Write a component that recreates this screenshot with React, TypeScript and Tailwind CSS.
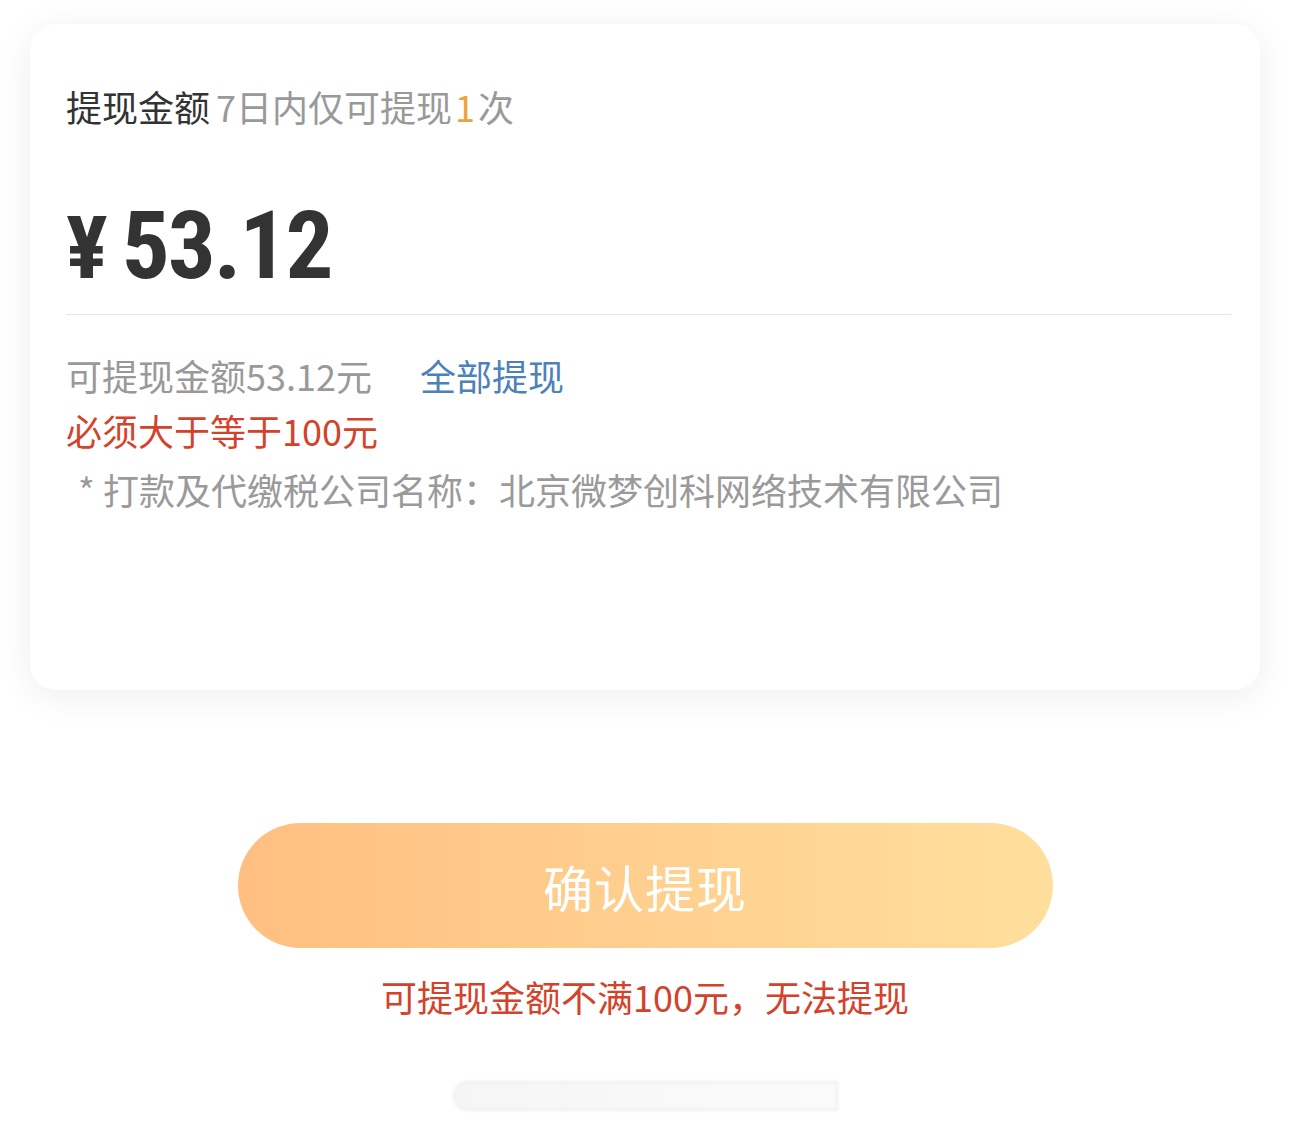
import React from "react";

const cjk = { fontFamily: '"Noto Sans CJK SC", "Noto Sans", sans-serif' };

export default function App() {
  return (
    <div className="w-[1290px] min-h-[1125px] bg-white flex flex-col items-center" style={cjk}>
      <div className="w-full px-[30px] pt-[24px]">
        <div className="bg-white rounded-[26px] shadow-[0_6px_36px_rgba(0,0,0,0.07)] pl-[36px] pr-[29px] pt-[62px] h-[666px]">
          <div className="text-[36px] leading-[40px] flex items-center">
            <span className="text-[#333333]">提现金额</span>
            <span className="text-[#999999] ml-[6px]">7日内仅可提现</span>
            <span className="text-[#f0a23a] mx-[3px]">1</span>
            <span className="text-[#999999]">次</span>
          </div>
          <div
            className="mt-[72px] h-[96px] leading-[96px] text-[95px] font-bold text-[#333333] flex items-baseline tracking-[-2px]"
            style={{ fontFamily: '"Liberation Sans Narrow", "Roboto Condensed", Roboto, sans-serif' }}
          >
            <span className="text-[88px] mr-[16px]">¥</span>
            <span>53.12</span>
          </div>
          <div className="mt-[20px] h-px bg-[#e6e6e6]" />
          <div className="mt-[33px] text-[36px] leading-[55px] flex">
            <span className="text-[#999999]">可提现金额53.12元</span>
            <span className="text-[#4d82b8] ml-[48px]">全部提现</span>
          </div>
          <div className="text-[36px] leading-[55px] text-[#d3432c]">必须大于等于100元</div>
          <div className="mt-[4px] text-[36px] leading-[55px] text-[#9a9a9a] pl-[12px]">
            * 打款及代缴税公司名称：北京微梦创科网络技术有限公司
          </div>
        </div>
      </div>
      <button className="mt-[133px] w-[815px] h-[125px] rounded-full bg-gradient-to-r from-[#ffbf80] to-[#ffdf9d] text-white text-[50px] leading-[122px] tracking-[1px]">
        确认提现
      </button>
      <div className="mt-[23px] text-[36px] leading-[50px] text-[#d3432c]">可提现金额不满100元，无法提现</div>
      <div className="mt-[60px] w-[385px] h-[30px] rounded-l-full border-2 border-[#e6e6e6] blur-[1.5px] opacity-70 bg-gradient-to-r from-[#f2f2f2] to-[#fafafa]" />
    </div>
  );
}
